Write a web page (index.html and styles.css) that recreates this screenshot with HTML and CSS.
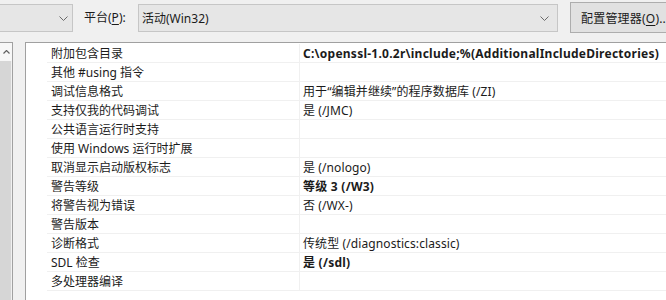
FILE: index.html
```html
<!DOCTYPE html>
<html lang="zh-CN">
<head>
  <meta charset="UTF-8">
  <title>属性页</title>
  <link rel="stylesheet" href="styles.css">
</head>
<body>
  <div class="toolbar">
    <div class="combo combo-config">
      <span class="combo-text"></span>
      <svg class="chevron" width="9" height="5" viewBox="0 0 9 5"><polyline points="0.5,0.5 4.5,4.5 8.5,0.5" /></svg>
    </div>
    <span class="label">平台(<u>P</u>):</span>
    <div class="combo combo-platform">
      <span class="combo-text">活动(Win32)</span>
      <svg class="chevron" width="9" height="5" viewBox="0 0 9 5"><polyline points="0.5,0.5 4.5,4.5 8.5,0.5" /></svg>
    </div>
    <button class="btn">配置管理器(<u>O</u>)...</button>
  </div>

  <div class="main">
    <div class="tree">
      <div class="scroll-up">
        <svg width="7" height="4" viewBox="0 0 7 4"><polyline points="0.5,3.5 3.5,0.5 6.5,3.5" /></svg>
      </div>
      <div class="scroll-thumb"></div>
    </div>

    <div class="grid" id="grid"></div>
  </div>

  <script>
    const props = [
      ['附加包含目录', 'C:\\openssl-1.0.2r\\include;%(AdditionalIncludeDirectories)', true],
      ['其他 #using 指令', '', false],
      ['调试信息格式', '用于“编辑并继续”的程序数据库 (/ZI)', false],
      ['支持仅我的代码调试', '是 (/JMC)', false],
      ['公共语言运行时支持', '', false],
      ['使用 Windows 运行时扩展', '', false],
      ['取消显示启动版权标志', '是 (/nologo)', false],
      ['警告等级', '等级 3 (/W3)', true],
      ['将警告视为错误', '否 (/WX-)', false],
      ['警告版本', '', false],
      ['诊断格式', '传统型 (/diagnostics:classic)', false],
      ['SDL 检查', '是 (/sdl)', true],
      ['多处理器编译', '', false]
    ];

    const grid = document.getElementById('grid');

    props.forEach(([name, value, bold]) => {
      const row = document.createElement('div');
      row.classList.add('row');
      row.innerHTML =
        '<div class="indent"></div>' +
        '<div class="name"></div>' +
        '<div class="value"></div>';
      row.querySelector('.name').textContent = name;
      const valueCell = row.querySelector('.value');
      valueCell.textContent = value;
      if (bold) valueCell.classList.add('bold');
      grid.appendChild(row);
    });
  </script>
</body>
</html>
```

FILE: styles.css
```css
body {
  margin: 0;
  background-color: #f0f0f0;
  color: #1b1b1b;
  font-family: "Noto Sans", "Noto Sans CJK SC", sans-serif;
  font-size: 12px;
  width: 666px;
  height: 300px;
  overflow: hidden;
}

u {
  text-decoration: underline;
  text-underline-offset: 2px;
}

.toolbar {
  display: flex;
  align-items: flex-start;
  height: 42px;
  white-space: nowrap;
}

.toolbar > * {
  flex-shrink: 0;
}

.combo {
  display: flex;
  align-items: center;
  justify-content: space-between;
  box-sizing: border-box;
  height: 28px;
  margin-top: 4px;
  background-color: #e6e6e6;
  border: 1px solid #c6c6c6;
  padding: 0 8px 0 3px;
}

.combo-config {
  width: 75px;
  margin-left: -2px;
  padding-right: 4px;
}

.combo-platform {
  width: 420px;
}

.chevron polyline {
  fill: none;
  stroke: #6a6a6a;
  stroke-width: 1;
}

.label {
  width: 54px;
  margin: 10px 0 0 11px;
  line-height: 16px;
}

.btn {
  box-sizing: border-box;
  height: 31px;
  margin-top: 2px;
  margin-left: 12px;
  padding: 0 0 0 10px;
  width: 110px;
  text-align: left;
  background-color: #e1e1e1;
  border: 1px solid #adadad;
  font: inherit;
  letter-spacing: 0.2px;
  color: inherit;
  white-space: nowrap;
}

.main {
  display: flex;
  height: 258px;
}

.tree {
  box-sizing: border-box;
  width: 13px;
  border-top: 1px solid #a0a0a0;
  border-right: 1px solid #a0a0a0;
  display: flex;
  flex-direction: column;
}

.scroll-up {
  height: 18px;
  background-color: #f7f7f7;
  display: flex;
  justify-content: center;
  padding-top: 7px;
  box-sizing: border-box;
}

.scroll-up polyline {
  fill: none;
  stroke: #606060;
  stroke-width: 1.2;
}

.scroll-thumb {
  flex: 1;
  background-color: #d6d6d6;
  margin-right: 1px;
}

.grid {
  margin-left: 12px;
  flex: 1;
  background-color: #ffffff;
  border-top: 1px solid #a0a0a0;
  border-left: 1px solid #a0a0a0;
  padding-top: 1px;
}

.row {
  display: flex;
  height: 19px;
}

.indent {
  width: 21px;
}

.name,
.value {
  box-sizing: border-box;
  height: 19px;
  padding-top: 1px;
  line-height: 17px;
  border-bottom: 1px solid #f0f0f0;
  white-space: nowrap;
  overflow: hidden;
}

.name {
  width: 253px;
  padding-left: 4px;
  border-right: 1px solid #f0f0f0;
}

.value {
  flex: 1;
  padding-left: 3px;
  letter-spacing: 0.1px;
}

.value.bold {
  font-weight: bold;
  letter-spacing: 0.25px;
}
```
